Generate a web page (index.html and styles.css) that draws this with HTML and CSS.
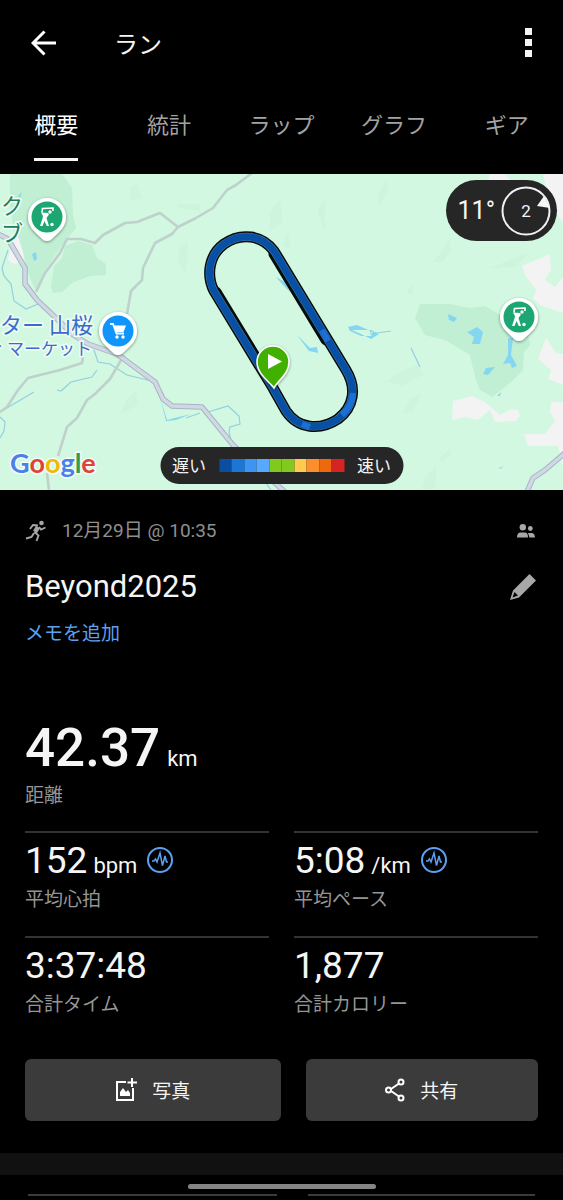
FILE: index.html
```html
<!DOCTYPE html>
<html lang="ja">
<head>
	<meta charset="utf-8">
	<title>ラン</title>
	<meta name="viewport" content="width=device-width, initial-scale=1.0">
	<link rel="stylesheet" href="styles.css">
</head>
<body>

<header class="topbar">
	<button class="icon-btn" aria-label="戻る">
		<svg width="26" height="26" viewBox="0 0 26 26"><path d="M13.500 1.500L2 13L13.500 24.500M2 13H25" fill="none" stroke="#fff" stroke-width="3"/></svg>
	</button>
	<h1>ラン</h1>
	<button class="icon-btn" aria-label="メニュー">
		<svg width="7" height="30" viewBox="0 0 7 30" fill="#f4f4f4"><path d="M0 0h7v7H0zM0 11h7v7H0zM0 22h7v7H0z"/></svg>
	</button>
</header>

<nav class="tabs">
	<a href="#" class="active">概要</a>
	<a href="#">統計</a>
	<a href="#">ラップ</a>
	<a href="#">グラフ</a>
	<a href="#">ギア</a>
</nav>

<div class="map">
	<svg class="map-art" viewBox="0 174 563 316">
		<defs>
			<filter id="shade" x="-30%" y="-30%" width="160%" height="160%">
				<feDropShadow dx="0" dy="1" stdDeviation="1.500" flood-opacity=".45"/>
			</filter>
			<g id="golfer" fill="#fff">
				<path d="M-5 -4.500L-4.500 -8.500L6 -9V-6" fill="none" stroke="#fff" stroke-width="1.600"/>
				<path d="M-6 -4.500L1 -4L2 -2.500L-.500 1L2 9H-.200L-2.500 4L-4.500 9H-7L-4.500 1.500L-4 -1Z"/>
				<circle cx="3" cy="-5" r="1.700"/>
				<circle cx="5" cy="7.500" r="1.700"/>
			</g>
			<path id="pin" d="M-19 0A19 19 0 1 1 19 0C19 9 13 14 9 18L3.500 23Q0 25 -3.500 23L-9 18C-13 14 -19 9 -19 0Z"/>
		</defs>
		<rect y="174" width="563" height="316" fill="#d2f8e1"/>

		<!-- woods and fields -->
		<g fill="#c0efd3">
			<path d="M10 174H62L72 188L73 215L76 228L60 248L44 272L36 292L26 268L15 240L10 205Z"/>
			<path d="M65 246L78 241L92 245L97 258L106 264V275L90 276L72 283L62 292L53 293L51 287L54 266L62 258Z"/>
			<path d="M420 304L450 304L470 308L485 306L500 315L527 328L530 345L524 352L523 370L510 383L492 397L480 390L475 377L470 355L445 340L425 335L415 318Z"/>
		</g>
		<g fill="#cdf4dd">
			<path d="M130 188L137 183L142 199L131 200ZM176 204H200V211L178 208ZM180 246L188 242L186 275L178 262ZM270 212L280 200L283 222L270 231ZM318 208L325 199V232L318 214ZM283 245L288 232L291 250ZM378 195L385 181L389 186L380 207ZM438 256L449 240L451 250L443 262L432 262ZM490 268L520 256L530 252L515 267L494 268ZM406 292L414 284L412 294Z"/>
			<path d="M376 388L402 371L418 365L424 374L402 386L385 381ZM403 413L410 398L422 393L412 412ZM440 457L450 449V455L442 462ZM425 477L436 466L435 489H422ZM126 400L136 391L138 405L121 414Z"/>
		</g>
		<g fill="#f3f3f3">
			<path d="M522 266L550 254L551 270L545 280L555 287L563 277V313L540 305L533 298L536 290L525 275Z"/>
			<path d="M490 174H505L512 182H488ZM543 174H563V222L550 205Z"/>
			<path d="M546 338L556 353L563 354V385L548 379L551 370L538 359Z"/>
			<path d="M453 401L472 396L485 402L500 415L511 409L518 410L520 416L516 421L495 422L490 410L478 420L465 417L452 420Z"/>
			<path d="M551 402H563V468L558 446L528 446L524 434L545 434L555 421L550 412Z"/>
			<path d="M12 242L18 236L23 252L25 262L14 264L8 260Z"/>
		</g>

		<!-- water -->
		<g fill="#84d6f1">
			<path d="M348 327L357 325L373 332L371 336L361 336L350 331ZM352 330L361 334L371 339L379 334L371 330Z"/>
			<path d="M276 277L285 282L290 292L283 285ZM297 335L310 348L317 347L318 353L309 351Z"/>
			<path d="M448 314L457 318L454 322L449 320ZM470 331L477 327L483 332L480 344H472L474 337L467 332ZM508 338L513 338L511 355L517 366L512 368L510 363L503 364L508 355ZM483 374L486 368L495 367L488 375ZM497 396L501 392L500 396ZM499 468L504 466L500 469Z"/>
			<path d="M32 254L36 252L37 259L34 261ZM18 196L22 192L20 198ZM160 397L167 420L183 416L191 414L176 420L166 421ZM370 330L373 331L370 333Z"/>
		</g>
		<g fill="none" stroke="#94cfe0" stroke-width="1.200">
			<path d="M8 250L2 268L4 276L11 284L14 301L26 309L38 304"/>
			<path d="M0 412L34 392M57 390L61 391L71 382L92 377L97 370M94 350L98 362L110 364L127 375L156 382M0 417L5 422L4 431L0 438"/>
			<path d="M208 412L228 406L239 416L240 424L230 427L229 432L232 445M186 418L200 413M266 483L271 490M370 334L391 331M411 348L420 367"/>
		</g>

		<!-- roads -->
		<g fill="none" stroke="#bed1cc" stroke-width="2.600" stroke-linejoin="round">
			<path d="M36 292L45 273L60 253L67 239L81 239L95 243L103 235L125 223L137 222L160 213L178 227L196 218L213 208L227 190L236 185L252 173"/>
			<path d="M178 227L172 234L155 243L143 268L142 280L131 291L127 314"/>
			<path d="M83 357L82 363L60 370L28 378L18 390L7 407L0 412M124 355L110 379L95 394L87 400L77 418L67 427L58 456M47 473L49 490"/>
		</g>
		<g fill="none" stroke-linejoin="round">
			<path d="M-2 234L8 239L25 268V284L37 300L55 317L72 334L88 344L117 354L155 382L163 399L172 406L202 407L233 445L285 492M526 494L533 478L545 470L565 453" stroke="#a9b4c5" stroke-width="5.500"/>
			<path d="M-2 234L8 239L25 268V284L37 300L55 317L72 334L88 344L117 354L155 382L163 399L172 406L202 407L233 445L285 492M526 494L533 478L545 470L565 453" stroke="#cfd8e3" stroke-width="3.500"/>
		</g>

		<!-- recorded track -->
		<g fill="none" stroke-linejoin="round">
			<path d="M273 388L214 291C206 275 209 255 224 244C241 232 262 235 274 251L346 370C357 388 354 407 338 419C320 431 298 429 286 411Z" stroke="#060b0c" stroke-width="11"/>
			<path d="M216 292L270 381M274 254L326 340" stroke="#060b0c" stroke-width="11" stroke-linecap="round"/>
			<path d="M273 388L214 291C206 275 209 255 224 244C241 232 262 235 274 251L346 370C357 388 354 407 338 419C320 431 298 429 286 411Z" stroke="#477f9b" stroke-width="8"/>
			<path d="M273 388L214 291C206 275 209 255 224 244C241 232 262 235 274 251L346 370C357 388 354 407 338 419C320 431 298 429 286 411Z" stroke="#0850a6" stroke-width="7"/>
			<path d="M322 330L328 341M353 393Q352 406 342 415M302 424L310 427" stroke="#1c6fd4" stroke-width="6"/>
		</g>

		<!-- places -->
		<text class="place green"><tspan x="1" y="214">ク</tspan><tspan x="1" y="241">ブ</tspan></text>
		<text class="place blue"><tspan x="0" y="333">ター 山桜</tspan><tspan x="-12" y="355" class="small">ィ</tspan><tspan x="7" y="355" class="small">マーケット</tspan></text>
		<g transform="translate(47 217)">
			<use href="#pin" fill="#fff" filter="url(#shade)"/>
			<circle r="15.500" fill="#1ca672"/>
			<use href="#golfer"/>
		</g>
		<g transform="translate(519 317)">
			<use href="#pin" fill="#fff" filter="url(#shade)"/>
			<circle r="15.500" fill="#1ca672"/>
			<use href="#golfer"/>
		</g>
		<g transform="translate(118 331)">
			<use href="#pin" fill="#fff" filter="url(#shade)"/>
			<circle r="15.500" fill="#0f95fb"/>
			<path d="M-8 -7H-5L-1.500 2.500H6" fill="none" stroke="#fff" stroke-width="1.800"/>
			<path d="M-4 -5.500H8L5.500 1H-1.500Z" fill="#fff"/>
			<circle cx="-1" cy="6" r="1.700" fill="#fff"/>
			<circle cx="5" cy="6" r="1.700" fill="#fff"/>
		</g>
		<path d="M274 388C270 382 257 374 257 362A16 16 0 0 1 289 362C289 374 278 380 274 388Z" fill="#43b000" stroke="#fff" stroke-width="1.500" filter="url(#shade)"/>
		<path d="M268 354V369L282 361.500Z" fill="#fff"/>

		<text class="google" x="10" y="473"><tspan fill="#4a80e8">G</tspan><tspan fill="#df4337">o</tspan><tspan fill="#efb908">o</tspan><tspan fill="#4a80e8">g</tspan><tspan fill="#319f50">l</tspan><tspan fill="#df4337">e</tspan></text>
	</svg>

	<div class="weather">
		<span>11°</span>
		<svg width="50" height="50" viewBox="0 0 50 50">
			<circle cx="25" cy="25" r="23.500" fill="none" stroke="#f0f0f0" stroke-width="2"/>
			<path d="M43 10L49 22L36 20Z" fill="#f7f7f7"/>
			<text x="25" y="31" text-anchor="middle" fill="#f4f4f4">2</text>
		</svg>
	</div>

	<div class="legend">
		<span>遅い</span>
		<div class="scale">
			<i class="s0"></i><i class="s1"></i><i class="s2"></i><i class="s3"></i><i class="s4"></i><i class="s4"></i><i class="s5"></i><i class="s6"></i><i class="s7"></i><i class="s8"></i>
		</div>
		<span>速い</span>
	</div>
</div>

<main class="info">
	<div class="row date">
		<svg width="22" height="22" viewBox="0 0 22 22" fill="none" stroke="#a6a6a6">
			<circle cx="16.500" cy="3" r="2.300" fill="#a6a6a6" stroke="none"/>
			<path d="M13 7L10 12" stroke-width="4.500"/>
			<path d="M13 5.500L8 5L5 9M14 7L16 9.500L20.500 7.500M9.500 12L13.500 15.500L11.500 21M9 13L6.500 17L1 18.500" stroke-width="1.900"/>
		</svg>
		<span class="grow">12月29日 @ 10:35</span>
		<svg width="18" height="14" viewBox="0 0 18 14" fill="#a8a8a8">
			<circle cx="5.800" cy="3.200" r="3.200"/><circle cx="13.300" cy="4.500" r="2.400"/>
			<path d="M0 13.500C0 10.500 1 9 3 8.500H8C10.500 9 11 10.500 11 13.500ZM11 9H15C17 9.500 17.800 11 18 13.500H12.500Z"/>
		</svg>
	</div>
	<div class="row name">
		<h2 class="grow">Beyond2025</h2>
		<button class="icon-btn" aria-label="名前を編集">
			<svg width="26" height="26" viewBox="0 0 26 26" fill="#a8a8a8"><path d="M19.500 0L26 6.500L9 23.500L0 26L3 16.500ZM4.500 18L2.500 23.500L8 21.500L6.500 20Z" fill-rule="evenodd"/></svg>
		</button>
	</div>
	<a href="#" class="memo">メモを追加</a>

	<div class="main-stat">
		<p class="value"><b>42.37</b> km</p>
		<p class="label">距離</p>
	</div>

	<div class="stats">
		<div class="stat">
			<p class="value"><b>152</b> bpm
				<svg class="pulse" width="26" height="26" viewBox="0 0 26 26"><circle cx="13" cy="13" r="12"/><path d="M5 14H7L8.500 12L10 15L13 6L15.500 18.500L18 9L19.500 15H21"/></svg>
			</p>
			<p class="label">平均心拍</p>
		</div>
		<div class="stat">
			<p class="value"><b>5:08</b> /km
				<svg class="pulse" width="26" height="26" viewBox="0 0 26 26"><circle cx="13" cy="13" r="12"/><path d="M5 14H7L8.500 12L10 15L13 6L15.500 18.500L18 9L19.500 15H21"/></svg>
			</p>
			<p class="label">平均ペース</p>
		</div>
		<div class="stat">
			<p class="value"><b>3:37:48</b></p>
			<p class="label">合計タイム</p>
		</div>
		<div class="stat">
			<p class="value"><b>1,877</b></p>
			<p class="label">合計カロリー</p>
		</div>
	</div>

	<div class="actions">
		<button>
			<svg width="22" height="24" viewBox="0 0 22 24"><path d="M11 4H2V22H18V10M17 0V9M12.500 4.500H22" fill="none" stroke="#fff" stroke-width="2"/><path d="M5 18V14L8 10L11 14L13 12L15 15V18Z" fill="#fff"/></svg>
			写真
		</button>
		<button>
			<svg width="20" height="24" viewBox="0 0 20 24" fill="none" stroke="#fff" stroke-width="2"><circle cx="3.500" cy="12" r="2.500"/><circle cx="16" cy="4" r="2.500"/><circle cx="16" cy="20" r="2.500"/><path d="M6 11L14 5.500M6 13L14 18.500"/></svg>
			共有
		</button>
	</div>
</main>

<div class="band"></div>
<div class="next">
	<div></div>
	<div></div>
</div>
<div class="home-bar"></div>

</body>
</html>
```

FILE: styles.css
```css
* {box-sizing:border-box;}
body {margin:0; background:#000; color:#f5f5f5; font-family:Roboto,"Noto Sans CJK JP",sans-serif; font-size:19px; line-height:28px;}
h1,h2,p {margin:0; font-weight:400;}
a {text-decoration:none;}
svg {display:block; flex:none;}
button {font:inherit; color:inherit; border:0; cursor:pointer;}
.icon-btn {background:none; padding:0;}
.grow {flex:1;}
.row {display:flex; align-items:center;}
h1,.memo,.label,.actions {font-family:"Noto Sans CJK JP",sans-serif;}

.topbar {display:flex; align-items:center; height:86px; padding:0 31px;}
.topbar h1 {flex:1; margin-left:57px; font-size:24px; line-height:36px;}

.tabs {display:grid; grid-template-columns:repeat(5,1fr); justify-items:center; padding:24px 0 13px;}
.tabs a {color:#a3a3a3; font-size:22px; line-height:32px; padding-bottom:16px; border-bottom:3px solid transparent; white-space:nowrap;}
.tabs a.active {color:#fff; border-color:#f5f5f5;}

.map {position:relative;}
.map-art {width:100%; height:auto;}
.place {font-family:"Noto Sans CJK JP",sans-serif; font-size:22px; paint-order:stroke; stroke:#effcf4; stroke-width:3px;}
.place .small {font-size:17px;}
.green {fill:#1c7f5e;}
.blue {fill:#3a6dcb;}
.google {font-family:Lato,sans-serif; font-size:27px; font-weight:700; paint-order:stroke; stroke:#f3fcf6; stroke-width:3px;}

.weather {position:absolute; top:6px; right:6px; display:flex; align-items:center; gap:6px; height:61px; padding:0 6px 0 12px; border-radius:31px; background:#262626; font-size:25px;}
.weather text {font-size:17px;}

.legend {position:absolute; bottom:6px; left:50%; transform:translateX(-50%); display:flex; align-items:center; gap:13px; height:37px; padding:0 12px; border-radius:19px; background:#262626; font-size:17px; white-space:nowrap;}
.scale {display:grid; grid-template-columns:repeat(10,1fr); width:125px; height:13px;}
.s0 {background:#0a4ea2;}
.s1 {background:#1c76d5;}
.s2 {background:#3d95f3;}
.s3 {background:#55a9ff;}
.s4 {background:#82c91e;}
.s5 {background:#ffcb4f;}
.s6 {background:#fd8e2c;}
.s7 {background:#ee680d;}
.s8 {background:#d62324;}

.info {padding:27px 25px 32px;}
.date {color:#8f8f8f; padding-right:3px; gap:15px;}
.name {margin-top:21px; padding-right:2px;}
.name h2 {font-size:31px; line-height:42px;}
.memo {display:block; margin-top:10px; color:#5ba1f0;}

.value {display:flex; align-items:baseline; gap:6px; height:44px; font-size:22px; line-height:24px; white-space:nowrap;}
.value b {font-size:37px; font-weight:400; line-height:44px;}
.label {margin-top:1px; color:#959595;}
.main-stat {margin-top:71px;}
.main-stat .value {height:62px; gap:7px;}
.main-stat b {font-size:53px; font-weight:500; line-height:62px;}

.stats {display:grid; grid-template-columns:1fr 1fr; gap:24px 25px; margin-top:23px;}
.stat {border-top:2px solid #333; padding-top:6px;}
.pulse {margin-left:4px; fill:none; stroke:#5ba1f0; stroke-width:2;}
.pulse path {stroke-width:1.5;}

.actions {display:grid; grid-template-columns:11fr 10fr; gap:25px; margin-top:42px;}
.actions button {display:flex; align-items:center; justify-content:center; gap:15px; height:62px; border-radius:6px; background:#3b3b3b;}

.band {height:22px; background:#111;}
.next {display:grid; grid-template-columns:11fr 10fr; gap:31px; padding:19px 28px 4px;}
.next div {height:2px; background:#3b3b3b;}
.home-bar {position:fixed; bottom:11px; left:50%; width:188px; height:5px; margin-left:-94px; border-radius:3px; background:#858585;}
```
